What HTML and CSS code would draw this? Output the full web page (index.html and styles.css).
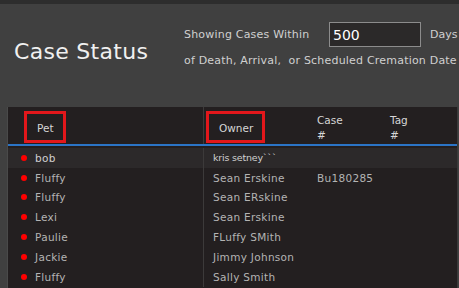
FILE: index.html
```html
<!DOCTYPE html>
<html lang="en">
<head>
    <meta charset="UTF-8">
    <title>Case Status</title>
    <link rel="stylesheet" href="styles.css">
</head>
<body>
    <div class="topbar"></div>

    <!-- title and filter -->
    <div class="header">
        <h1>Case Status</h1>
        <div class="filter">
            <div class="filter-line">
                <span class="filter-label">Showing Cases Within</span>
                <input type="text" class="days-input" value="500">
                <span class="days">Days</span>
            </div>
            <div class="filter-sub">of Death, Arrival,&nbsp; or Scheduled Cremation Date</div>
        </div>
    </div>

    <!-- cases table -->
    <div class="panel">
        <div class="row head">
            <div class="cell dot-cell"></div>
            <div class="cell pet"><span class="boxed">Pet</span></div>
            <div class="cell owner"><span class="boxed">Owner</span></div>
            <div class="cell case">Case<br>#</div>
            <div class="cell tag">Tag<br>#</div>
        </div>
        <div class="row first">
            <div class="cell dot-cell"><span class="dot"></span></div>
            <div class="cell pet">bob</div>
            <div class="cell owner bright">kris setney```</div>
            <div class="cell case"></div>
            <div class="cell tag"></div>
        </div>
        <div class="row">
            <div class="cell dot-cell"><span class="dot"></span></div>
            <div class="cell pet">Fluffy</div>
            <div class="cell owner">Sean Erskine</div>
            <div class="cell case">Bu180285</div>
            <div class="cell tag"></div>
        </div>
        <div class="row">
            <div class="cell dot-cell"><span class="dot"></span></div>
            <div class="cell pet">Fluffy</div>
            <div class="cell owner">Sean ERskine</div>
            <div class="cell case"></div>
            <div class="cell tag"></div>
        </div>
        <div class="row">
            <div class="cell dot-cell"><span class="dot"></span></div>
            <div class="cell pet">Lexi</div>
            <div class="cell owner">Sean Erskine</div>
            <div class="cell case"></div>
            <div class="cell tag"></div>
        </div>
        <div class="row">
            <div class="cell dot-cell"><span class="dot"></span></div>
            <div class="cell pet">Paulie</div>
            <div class="cell owner">FLuffy SMith</div>
            <div class="cell case"></div>
            <div class="cell tag"></div>
        </div>
        <div class="row">
            <div class="cell dot-cell"><span class="dot"></span></div>
            <div class="cell pet">Jackie</div>
            <div class="cell owner">Jimmy Johnson</div>
            <div class="cell case"></div>
            <div class="cell tag"></div>
        </div>
        <div class="row">
            <div class="cell dot-cell"><span class="dot"></span></div>
            <div class="cell pet">Fluffy</div>
            <div class="cell owner">Sally Smith</div>
            <div class="cell case"></div>
            <div class="cell tag"></div>
        </div>
    </div>
</body>
</html>
```

FILE: styles.css
```css
* { margin: 0; padding: 0; box-sizing: border-box; }
html, body { height: 100%; overflow: hidden; }
body {
    font-family: "DejaVu Sans", sans-serif;
    background: #404040;
    color: #d8d8d8;
}
.topbar { height: 4px; background: #2d2d2d; }
.header {
    display: flex;
    height: 103px;
    padding-left: 14px;
}
h1 {
    flex-shrink: 0;
    font-weight: normal;
    font-size: 22px;
    color: #f0f0f0;
    margin-top: 35px;
    width: 170px;
    letter-spacing: 0.3px;
}
.filter { flex-shrink: 0; padding-top: 18px; font-size: 11px; color: #d0d0d0; }
.filter-line { display: flex; align-items: center; height: 24px; }
.filter-label { width: 145px; letter-spacing: 0.2px; }
.days-input {
    width: 92px;
    height: 25px;
    background: #2b2929;
    border: 1px solid #8c8c8c;
    color: #ffffff;
    font-family: "DejaVu Sans", sans-serif;
    font-size: 14px;
    padding: 2px 3px 0;
    outline: none;
}
.days { margin-left: 9px; }
.filter-sub { margin-top: 8px; white-space: nowrap; letter-spacing: 0.2px; }

.panel {
    margin-left: 7px;
    background: #231f20;
    border-left: 1px solid #4a4a4a;
    border-right: 1px solid #3a3a3a;
    height: 190px;
    width: 451px;
}
.row {
    display: grid;
    grid-template-columns: 27px 168px 108px 73px 1fr;
    height: 19.8px;
    font-size: 10.5px;
    letter-spacing: 0.3px;
    color: #b4b4b4;
}
.row.first { background: #2c292a; margin-top: 2px; color: #d0d0d0; }
.cell { display: flex; align-items: center; white-space: nowrap; }
.owner { border-left: 1px solid #3c3a3a; padding-left: 9px; }
.bright { font-size: 9.5px; letter-spacing: -0.2px; }
.dot-cell { justify-content: center; }
.dot {
    width: 6px;
    height: 6px;
    border-radius: 50%;
    background: #ff0000;
    margin-left: 4px;
}
.row.head {
    height: 39px;
    border-bottom: 2px solid #2b74c6;
    color: #d6d6d6;
    font-size: 10.5px;
    letter-spacing: 0;
}
.head .pet { align-items: flex-end; padding-bottom: 1px; margin-left: -11px; }
.head .owner { align-items: flex-end; padding-bottom: 1px; padding-left: 2px; }
.boxed {
    border: 3px solid #e3171b;
    padding: 8px 9px 6px 10px;
}
.head .case, .head .tag { line-height: 15px; align-items: flex-start; padding-top: 6px; }
.case { padding-left: 6px; }
.tag { padding-left: 6px; }
```
